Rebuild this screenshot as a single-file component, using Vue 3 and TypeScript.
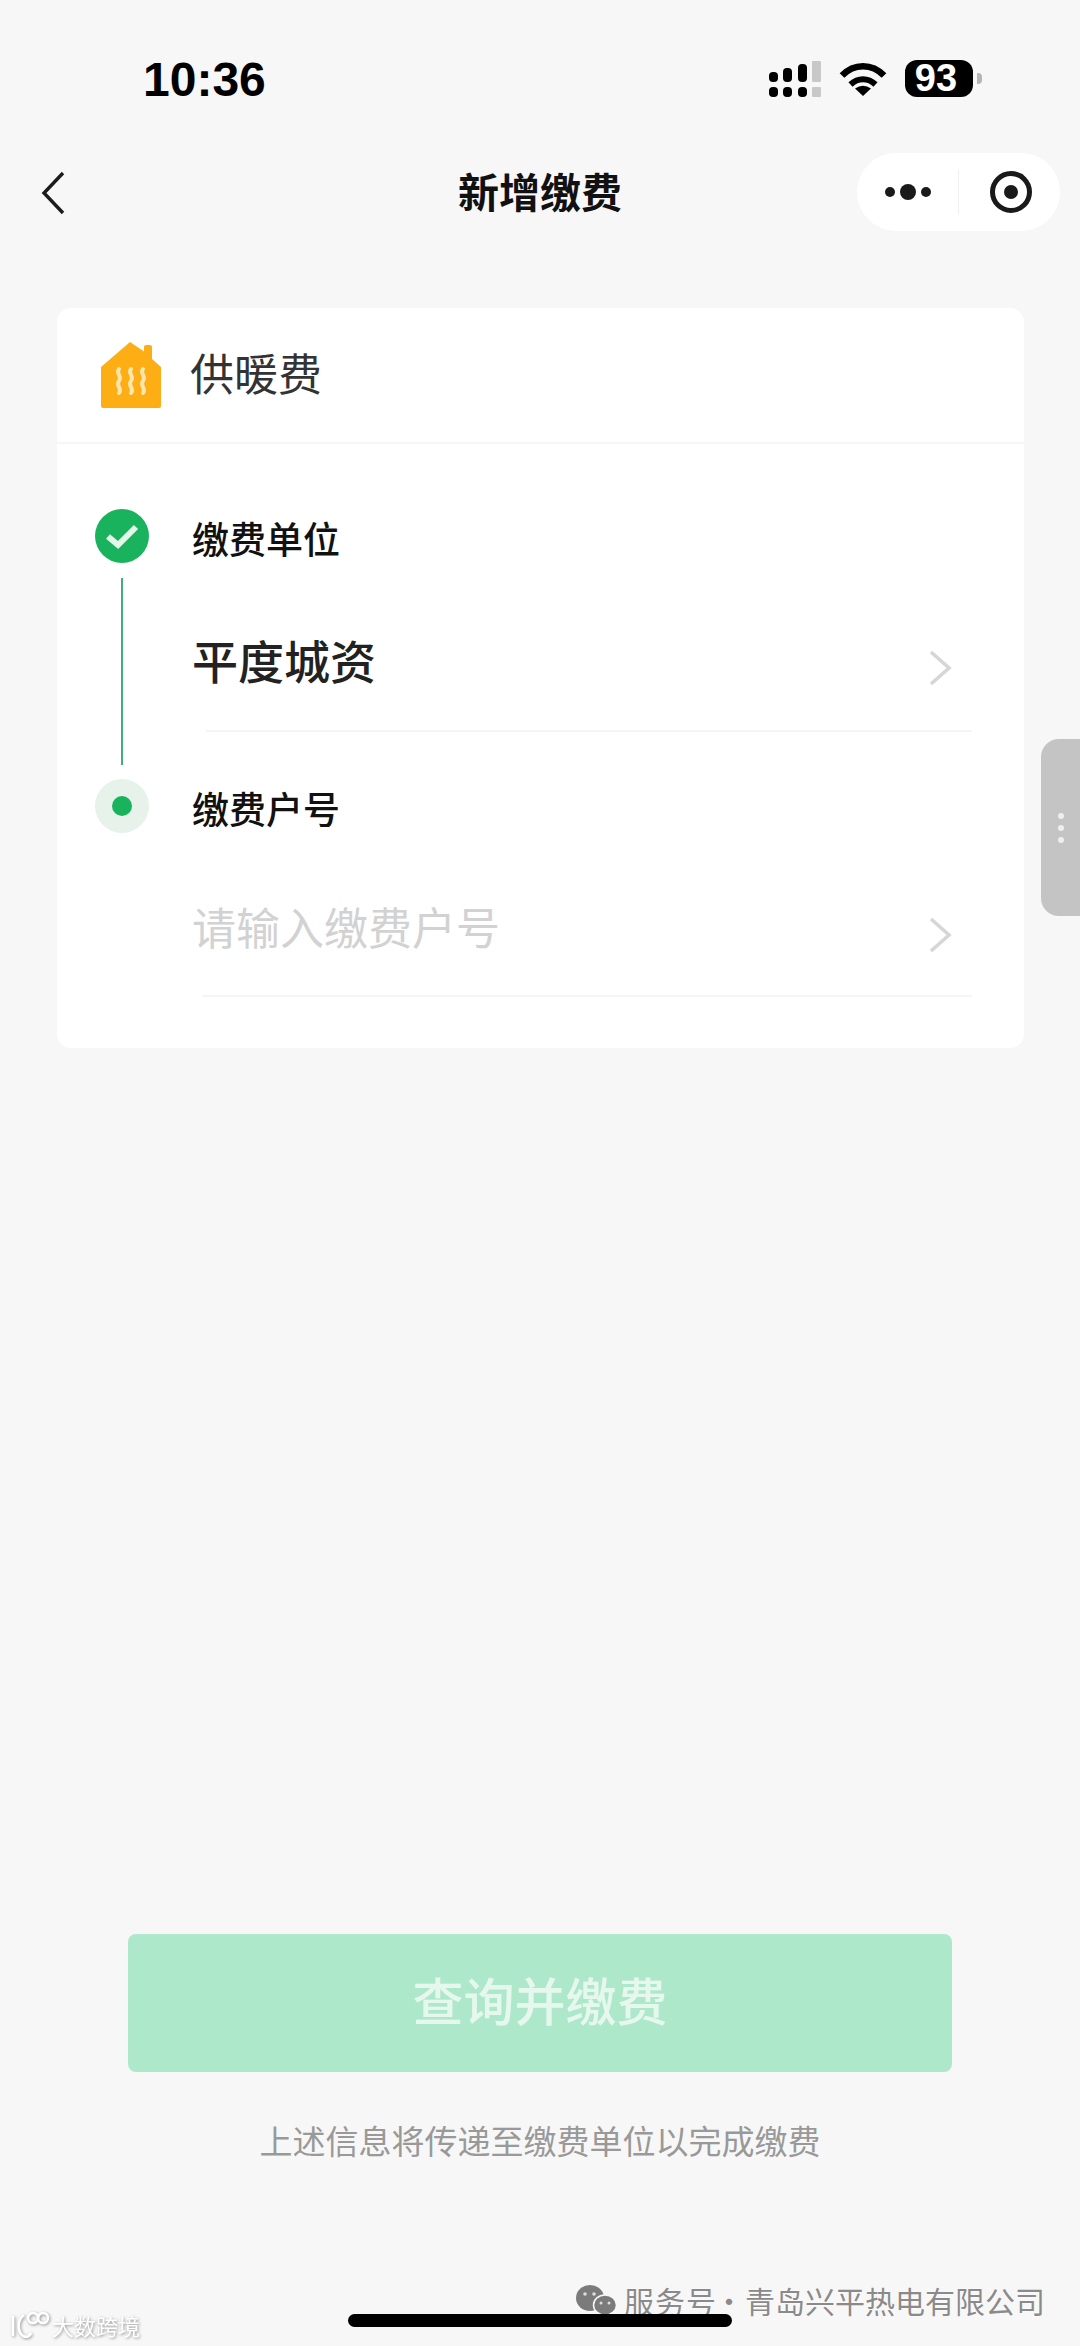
<template>
  <div class="page">
    <div class="status-bar">
      <span class="clock">10:36</span>
      <div class="status-icons">
        <div class="signal">
          <div v-for="col in signalCols" :key="col.height" class="signal-col" :class="{ off: col.off }">
            <i class="signal-top" :style="{ height: col.height + 'px' }"></i>
            <i class="signal-dot"></i>
          </div>
        </div>
        <svg class="wifi" width="48" height="34" viewBox="0 0 48 34">
          <path d="M3 13.5C15 1 33 1 45 13.5" fill="none" stroke="#000" stroke-width="6.5" />
          <path d="M11.5 22.5C19 15.5 29 15.5 36.5 22.5" fill="none" stroke="#000" stroke-width="6" />
          <path d="M24 34L16 26.5Q24 21 32 26.5Z" fill="#000" />
        </svg>
        <div class="battery"><span>93</span></div>
        <i class="battery-tip"></i>
      </div>
    </div>

    <div class="nav-bar">
      <svg class="back" width="24" height="44" viewBox="0 0 24 44">
        <path d="M22 2L3 22L22 42" fill="none" stroke="#1c1c1c" stroke-width="3.4" />
      </svg>
      <h1 class="nav-title">新增缴费</h1>
      <div class="capsule">
        <div class="capsule-dots"><i></i><i class="big"></i><i></i></div>
        <i class="capsule-line"></i>
        <div class="capsule-target"><i></i></div>
      </div>
    </div>

    <section class="card">
      <header class="card-header">
        <svg class="house" width="60" height="66" viewBox="0 0 60 66">
          <path
            d="M29 0L43 9.5V5Q43 3 45 3H49Q51 3 51 5V17L60 25V64Q60 66 58 66H2Q0 66 0 64V25Z"
            fill="#fcae14"
          />
          <path
            v-for="x in waveXs"
            :key="x"
            :d="`M${x} 27c-4 4 4 7.500 0 12s4 7.500 0 12`"
            fill="none"
            stroke="#fde5ae"
            stroke-width="4"
            stroke-linecap="round"
          />
        </svg>
        <span class="card-title">供暖费</span>
      </header>

      <div class="steps">
        <div class="step step-done">
          <div class="rail">
            <svg class="check" width="54" height="54" viewBox="0 0 54 54">
              <circle cx="27" cy="27" r="27" fill="#1ab35d" />
              <path d="M13 27.500L23 36L41 18" fill="none" stroke="#e2f7e9" stroke-width="6" />
            </svg>
            <i class="connector"></i>
          </div>
          <div class="content">
            <div class="step-label">缴费单位</div>
            <div class="row row-first">
              <span class="row-value">平度城资</span>
              <svg class="chevron" width="24" height="36" viewBox="0 0 24 36">
                <path d="M3 2L21 18L3 34" fill="none" stroke="#d6d6d6" stroke-width="3.600" />
              </svg>
            </div>
            <i class="row-line"></i>
          </div>
        </div>

        <div class="step">
          <div class="rail">
            <div class="current"><i></i></div>
          </div>
          <div class="content">
            <div class="step-label">缴费户号</div>
            <div class="row row-second">
              <span class="row-placeholder">请输入缴费户号</span>
              <svg class="chevron" width="24" height="36" viewBox="0 0 24 36">
                <path d="M3 2L21 18L3 34" fill="none" stroke="#d6d6d6" stroke-width="3.600" />
              </svg>
            </div>
            <i class="row-line short"></i>
          </div>
        </div>
      </div>
    </section>

    <div class="footer">
      <button class="submit" type="button">查询并缴费</button>
      <p class="hint">上述信息将传递至缴费单位以完成缴费</p>
    </div>

    <div class="side-tab"><i></i><i></i><i></i></div>

    <div class="mark-left">
      <svg width="40" height="28" viewBox="0 0 40 28">
        <g fill="none" stroke="#fff" stroke-width="2.600">
          <path d="M3 5V25" />
          <path d="M14 4C7 9 7 20 13 25C17 27 20 25 21 22" />
          <circle cx="23" cy="7" r="5" />
          <circle cx="33" cy="7" r="5" />
        </g>
      </svg>
      <span>大数跨境</span>
    </div>

    <div class="mark-right">
      <svg width="42" height="30" viewBox="0 0 42 30">
        <ellipse cx="15" cy="13" rx="14" ry="13" fill="#7b7b7b" />
        <ellipse cx="30" cy="20" rx="11.500" ry="10" fill="#7b7b7b" stroke="#f7f7f7" stroke-width="1.500" />
        <circle cx="10" cy="9" r="1.800" fill="#ddd" />
        <circle cx="19" cy="9" r="1.800" fill="#ddd" />
        <circle cx="26" cy="18" r="1.500" fill="#ddd" />
        <circle cx="34" cy="18" r="1.500" fill="#ddd" />
      </svg>
      <span class="mark-kind">服务号</span>
      <span class="mark-dot">·</span>
      <span class="mark-name">青岛兴平热电有限公司</span>
    </div>

    <i class="home-bar"></i>
  </div>
</template>

<script setup lang="ts">
const signalCols = [
  { height: 10, off: false },
  { height: 14, off: false },
  { height: 18, off: false },
  { height: 21, off: true },
]

const waveXs = [18, 30, 42]
</script>

<style>
html,
body {
  margin: 0;
  background: #f7f7f7;
}
</style>

<style scoped>
.page {
  position: relative;
  width: 1080px;
  height: 2346px;
  overflow: hidden;
  display: flex;
  flex-direction: column;
  background: #f7f7f7;
  font-family: "Noto Sans CJK SC", "Liberation Sans", sans-serif;
}

i {
  display: block;
}

.status-bar {
  height: 153px;
  box-sizing: border-box;
  padding: 60px 98px 0 143px;
  display: flex;
  justify-content: space-between;
  align-items: flex-start;
}

.clock {
  font-family: "Liberation Sans", sans-serif;
  font-size: 48px;
  font-weight: 700;
  line-height: 40px;
  color: #000;
}

.status-icons {
  display: flex;
  align-items: flex-start;
}

.signal {
  display: flex;
  gap: 5.500px;
  margin: 1px 18px 0 0;
  height: 36px;
  align-items: flex-end;
}

.signal-col {
  display: flex;
  flex-direction: column;
  gap: 5px;
  width: 9px;
}

.signal-top,
.signal-dot {
  background: #000;
  border-radius: 4px;
}

.signal-dot {
  height: 10px;
}

.signal-col.off i {
  background: #c8c8c8;
  border-radius: 1px;
}

.wifi {
  margin: 2px 18px 0 0;
}

.battery {
  width: 68px;
  height: 37px;
  border-radius: 12px;
  background: #000;
  color: #fff;
  display: flex;
  align-items: center;
  justify-content: center;
  font-family: "Liberation Sans", sans-serif;
  font-size: 38px;
  font-weight: 700;
}

.battery span {
  margin-right: 6px;
}

.battery-tip {
  width: 5px;
  height: 11px;
  margin: 13px 0 0 4px;
  background: #b5b5b5;
  border-radius: 0 4px 4px 0;
}

.nav-bar {
  position: relative;
  height: 78px;
  display: flex;
  align-items: center;
  justify-content: space-between;
  padding: 0 20px 0 41px;
}

.back {
  margin-top: 1px;
}

.nav-title {
  position: absolute;
  left: 0;
  right: 0;
  top: 0;
  margin: 0;
  text-align: center;
  font-size: 41px;
  font-weight: 700;
  line-height: 74px;
  color: #111;
  pointer-events: none;
}

.capsule {
  width: 203px;
  height: 78px;
  border-radius: 39px;
  background: #fff;
  display: flex;
  align-items: center;
}

.capsule-dots {
  width: 101px;
  display: flex;
  align-items: center;
  justify-content: center;
  gap: 5px;
}

.capsule-dots i {
  width: 10px;
  height: 10px;
  border-radius: 50%;
  background: #1a1a1a;
}

.capsule-dots i.big {
  width: 16px;
  height: 16px;
}

.capsule-line {
  width: 1px;
  height: 46px;
  background: #f0f0f0;
}

.capsule-target {
  width: 42px;
  height: 42px;
  box-sizing: border-box;
  border: 5px solid #1a1a1a;
  border-radius: 50%;
  margin-left: 31px;
  display: flex;
  align-items: center;
  justify-content: center;
}

.capsule-target i {
  width: 14px;
  height: 14px;
  border-radius: 50%;
  background: #1a1a1a;
}

.card {
  margin: 77px 56px 0 57px;
  background: #fff;
  border-radius: 14px;
}

.card-header {
  height: 136px;
  box-sizing: border-box;
  padding: 34px 0 0 44px;
  display: flex;
  align-items: flex-start;
  gap: 29px;
  border-bottom: 2px solid #f6f6f6;
}

.card-title {
  font-size: 44px;
  line-height: 60px;
  color: #333;
}

.steps {
  padding: 65px 52px 51px 38px;
}

.step {
  display: flex;
}

.step-done {
  height: 270px;
}

.rail {
  width: 54px;
  flex: none;
  display: flex;
  flex-direction: column;
  align-items: center;
}

.connector {
  width: 2px;
  height: 187px;
  margin-top: 15px;
  background: #3fae78;
}

.current {
  width: 54px;
  height: 54px;
  border-radius: 50%;
  background: #e6f2ea;
  display: flex;
  align-items: center;
  justify-content: center;
}

.current i {
  width: 20px;
  height: 20px;
  border-radius: 50%;
  background: #1ab35d;
}

.content {
  flex: 1;
  margin-left: 43px;
}

.step-label {
  height: 54px;
  padding-top: 4px;
  box-sizing: border-box;
  font-size: 37px;
  font-weight: 500;
  line-height: 50px;
  color: #111;
}

.row {
  display: flex;
  align-items: center;
  justify-content: space-between;
  box-sizing: border-box;
  padding-right: 20px;
}

.row-first {
  height: 167px;
  padding-top: 24px;
}

.row-second {
  height: 162px;
  padding-top: 24px;
}

.chevron {
  margin-top: 18px;
}

.row-value {
  font-size: 46px;
  font-weight: 500;
  color: #222;
}

.row-placeholder {
  font-size: 44px;
  color: #d2d2d2;
}

.row-line {
  height: 2px;
  margin-left: 14px;
  background: #f5f5f5;
}

.row-line.short {
  margin-left: 10px;
}

.footer {
  margin-top: auto;
  padding: 0 128px 182px;
  display: flex;
  flex-direction: column;
  align-items: stretch;
}

.submit {
  height: 138px;
  padding: 0 0 8px;
  border: none;
  border-radius: 8px;
  background: #aee8ca;
  color: #e6f8ee;
  font-family: inherit;
  font-size: 51px;
  font-weight: 500;
}

.hint {
  margin: 44px 0 0;
  text-align: center;
  font-size: 33px;
  line-height: 48px;
  color: #999;
  white-space: nowrap;
}

.side-tab {
  position: absolute;
  top: 739px;
  right: 0;
  width: 39px;
  height: 177px;
  box-sizing: border-box;
  padding-top: 74px;
  border-radius: 18px 0 0 18px;
  background: #c4c4c4;
  display: flex;
  flex-direction: column;
  align-items: center;
  gap: 6px;
}

.side-tab i {
  width: 6px;
  height: 6px;
  border-radius: 50%;
  background: #eee;
}

.mark-left {
  position: absolute;
  left: 10px;
  top: 2311px;
  display: flex;
  align-items: center;
  gap: 2px;
  filter: drop-shadow(1px 1px 1.500px rgba(0, 0, 0, 0.4));
}

.mark-left span {
  font-size: 22px;
  line-height: 28px;
  color: #fff;
}

.mark-right {
  position: absolute;
  left: 575px;
  top: 2282px;
  display: flex;
  align-items: center;
  height: 36px;
  color: #8a8a8a;
  font-size: 30px;
  white-space: nowrap;
  text-shadow: 0 0 2px rgba(255, 255, 255, 0.9);
}

.mark-kind {
  margin-left: 7px;
  letter-spacing: 1px;
}

.mark-dot {
  margin: 0 1px 0 -3px;
}

.mark-name {
  letter-spacing: 0;
}

.home-bar {
  position: absolute;
  left: 348px;
  top: 2314px;
  width: 384px;
  height: 13px;
  border-radius: 7px;
  background: #000;
}
</style>
